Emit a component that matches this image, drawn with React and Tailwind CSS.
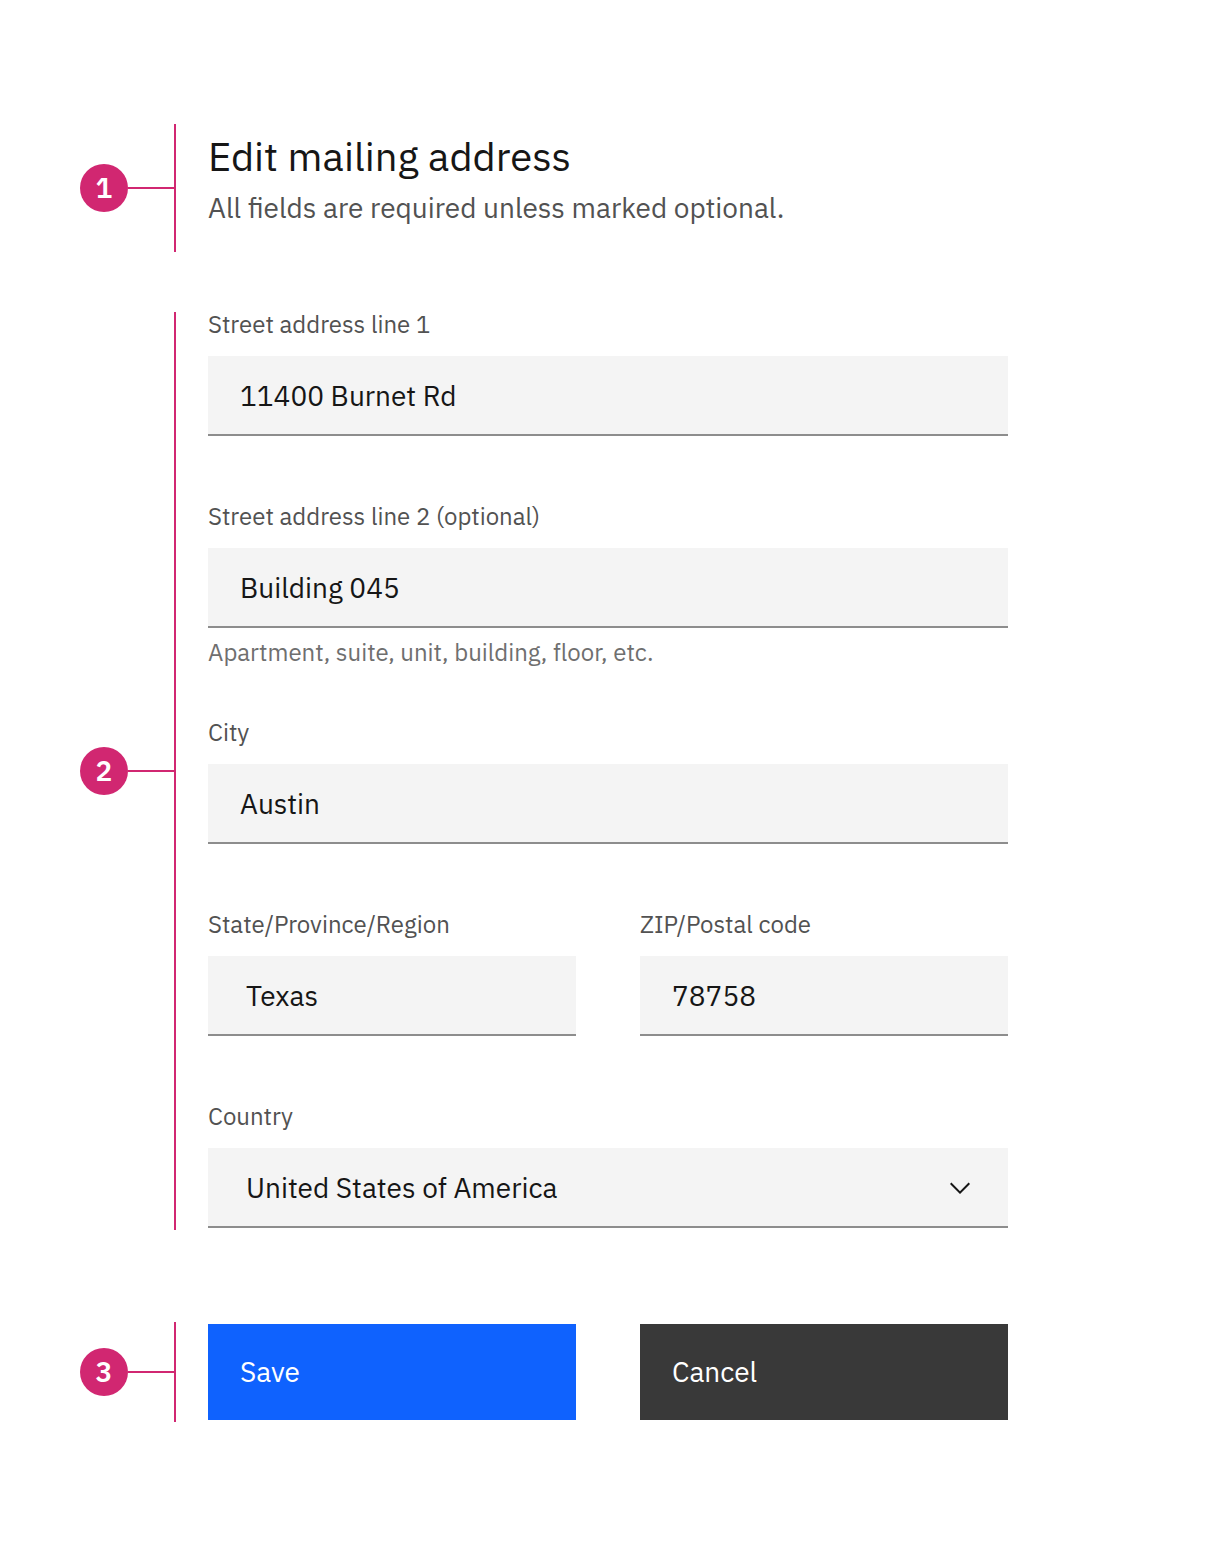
import React from "react";

const box =
  "block h-20 w-full min-w-0 appearance-none rounded-none border-0 border-b-2 border-[#8d8d8d] bg-[#f4f4f4] pr-8 text-[28px] leading-9 text-[#161616] outline-none focus:border-[#0f62fe]";

function Section({ number, className = "", children }) {
  return (
    <section className={`flex items-stretch ${className}`}>
      <div className="flex shrink-0 items-center" aria-hidden="true">
        <span className="flex size-12 items-center justify-center rounded-full bg-[#d12771] text-[28px] leading-none font-semibold text-white">
          {number}
        </span>
        <span className="h-0.5 w-[46px] bg-[#d12771]" />
      </div>
      <div className="min-w-0 flex-1 border-l-2 border-[#d12771] pl-8">{children}</div>
    </section>
  );
}

function Field({ id, label, helper, spacing = "pb-3", children }) {
  return (
    <div className={`min-w-0 flex-1 ${helper ? "" : spacing}`}>
      <label htmlFor={id} className="mb-5 block text-2xl leading-6 text-[#525252]">
        {label}
      </label>
      {children}
      {helper && (
        <p id={`${id}-helper`} className="mt-3 text-2xl leading-6 text-[#6f6f6f]">
          {helper}
        </p>
      )}
    </div>
  );
}

export default function App() {
  return (
    <main className="min-h-screen bg-white px-20 py-[124px] font-['IBM_Plex_Sans','Noto_Sans',sans-serif]">
      <form className="max-w-[928px]" onSubmit={(e) => e.preventDefault()}>
        <Section number="1" className="mb-[60px]">
          <div className="pt-2 pb-6">
            <h1 className="text-[40px] leading-12 text-[#161616]">Edit mailing address</h1>
            <p className="mt-2 text-[28px] leading-10 text-[#525252]">
              All fields are required unless marked optional.
            </p>
          </div>
        </Section>

        <Section number="2" className="mb-[92px]">
          <div className="flex flex-col gap-14">
            <Field id="street1" label="Street address line 1">
              <input id="street1" type="text" defaultValue="11400 Burnet Rd" className={`${box} pl-8`} />
            </Field>
            <Field
              id="street2"
              label="Street address line 2 (optional)"
              helper="Apartment, suite, unit, building, floor, etc."
            >
              <input
                id="street2"
                type="text"
                defaultValue="Building 045"
                aria-describedby="street2-helper"
                className={`${box} pl-8`}
              />
            </Field>
            <Field id="city" label="City">
              <input id="city" type="text" defaultValue="Austin" className={`${box} pl-8`} />
            </Field>
            <div className="flex gap-16">
              <Field id="region" label="State/Province/Region">
                <input id="region" type="text" defaultValue="Texas" className={`${box} pl-[38px]`} />
              </Field>
              <Field id="zip" label="ZIP/Postal code">
                <input id="zip" type="text" defaultValue="78758" className={`${box} pl-8`} />
              </Field>
            </div>
            <Field id="country" label="Country" spacing="pb-0.5">
              <div className="relative">
                <select id="country" defaultValue="us" className={`${box} pt-0.5 pl-[38px]`}>
                  <option value="us">United States of America</option>
                </select>
                <svg
                  viewBox="0 0 32 32"
                  className="pointer-events-none absolute top-6 right-8 size-8"
                  aria-hidden="true"
                >
                  <path d="M16 22 6 12l1.4-1.4 8.6 8.6 8.6-8.6L26 12z" fill="#161616" />
                </svg>
              </div>
            </Field>
          </div>
        </Section>

        <Section number="3">
          <div className="flex gap-16 py-0.5">
            <button type="submit" className="h-24 min-w-0 flex-1 bg-[#0f62fe] px-8 text-left text-[28px] text-white">
              Save
            </button>
            <button type="button" className="h-24 min-w-0 flex-1 bg-[#393939] px-8 text-left text-[28px] text-white">
              Cancel
            </button>
          </div>
        </Section>
      </form>
    </main>
  );
}
